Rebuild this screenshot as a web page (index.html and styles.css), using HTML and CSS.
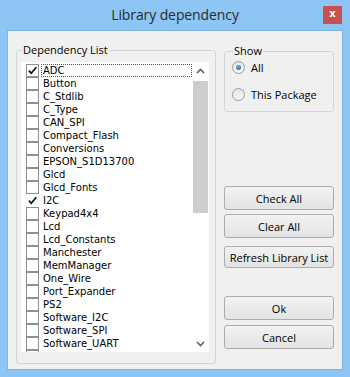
FILE: index.html
```html
<!DOCTYPE html>
<html lang="en">
<head>
  <meta charset="UTF-8">
  <title>Library dependency</title>
  <link rel="stylesheet" href="styles.css">
</head>
<body>
  <div class="window">
    <!-- Title bar -->
    <div class="titlebar">
      <span></span>
      <span class="title">Library dependency</span>
      <span class="controls"><button class="close">x</button></span>
    </div>

    <div class="client">
      <!-- Left: dependency list -->
      <fieldset class="group deps">
        <legend>Dependency List</legend>
        <div class="listbox">
          <ul class="items">
            <li class="focused"><span class="box"><svg viewBox="0 0 12 12"><path d="M2 6.2 L4.6 9 L10.2 2.4" /></svg></span><span class="label">ADC</span></li>
            <li><span class="box"></span><span class="label">Button</span></li>
            <li><span class="box"></span><span class="label">C_Stdlib</span></li>
            <li><span class="box"></span><span class="label">C_Type</span></li>
            <li><span class="box"></span><span class="label">CAN_SPI</span></li>
            <li><span class="box"></span><span class="label">Compact_Flash</span></li>
            <li><span class="box"></span><span class="label">Conversions</span></li>
            <li><span class="box"></span><span class="label">EPSON_S1D13700</span></li>
            <li><span class="box"></span><span class="label">Glcd</span></li>
            <li><span class="box"></span><span class="label">Glcd_Fonts</span></li>
            <li><span class="box plain"><svg viewBox="0 0 12 12"><path d="M2 6.2 L4.6 9 L10.2 2.4" /></svg></span><span class="label">I2C</span></li>
            <li><span class="box"></span><span class="label">Keypad4x4</span></li>
            <li><span class="box"></span><span class="label">Lcd</span></li>
            <li><span class="box"></span><span class="label">Lcd_Constants</span></li>
            <li><span class="box"></span><span class="label">Manchester</span></li>
            <li><span class="box"></span><span class="label">MemManager</span></li>
            <li><span class="box"></span><span class="label">One_Wire</span></li>
            <li><span class="box"></span><span class="label">Port_Expander</span></li>
            <li><span class="box"></span><span class="label">PS2</span></li>
            <li><span class="box"></span><span class="label">Software_I2C</span></li>
            <li><span class="box"></span><span class="label">Software_SPI</span></li>
            <li><span class="box"></span><span class="label">Software_UART</span></li>
            <li><span class="box"></span></li>
          </ul>
          <div class="scrollbar">
            <span class="arrow"><svg viewBox="0 0 9 6"><path d="M1 5 L4.5 1.5 L8 5" /></svg></span>
            <div class="track"><div class="thumb"></div></div>
            <span class="arrow"><svg viewBox="0 0 9 6"><path d="M1 1 L4.5 4.5 L8 1" /></svg></span>
          </div>
        </div>
      </fieldset>

      <!-- Right: options and actions -->
      <div class="side">
        <fieldset class="group show">
          <legend>Show</legend>
          <label class="radio"><span class="dot on"></span>All</label>
          <label class="radio"><span class="dot"></span>This Package</label>
        </fieldset>
        <button class="btn check-all">Check All</button>
        <button class="btn clear-all">Clear All</button>
        <button class="btn refresh">Refresh Library List</button>
        <button class="btn ok">Ok</button>
        <button class="btn cancel">Cancel</button>
      </div>
    </div>
  </div>
</body>
</html>
```

FILE: styles.css
```css
/* Page */
body {
  margin: 0;
  padding: 0;
  background: #8dc6f4;
  font-family: "DejaVu Sans", sans-serif;
}
.window {
  width: 350px;
  height: 377px;
  box-sizing: border-box;
  background: #8dc6f4;
  padding: 0 7px 7px 7px;
  display: flex;
  flex-direction: column;
}
/* Title bar */
.titlebar {
  height: 30px;
  display: grid;
  grid-template-columns: 1fr auto 1fr;
  align-items: start;
}
.title {
  font-family: "Open Sans", sans-serif;
  font-size: 14px;
  color: #2b2b2b;
  margin-top: 5px;
  letter-spacing: -0.1px;
}
.controls {
  display: flex;
  justify-content: flex-end;
  padding-right: 1px;
}
.close {
  width: 19px;
  height: 18px;
  margin-top: 6px;
  border: 0;
  padding: 0 0 2px 0;
  background: #c75050;
  color: #fff;
  font-family: "DejaVu Sans", sans-serif;
  font-weight: bold;
  font-size: 10px;
  line-height: 16px;
}
/* Client area */
.client {
  flex: 1;
  background: #f0f0f0;
  border: 1px solid #82b3dc;
  display: flex;
  padding: 12px 0 0 8px;
  gap: 8px;
}
.group {
  margin: 0;
  border: 1px solid #d5d5d5;
  border-radius: 3px;
  box-sizing: border-box;
}
.group legend {
  font-family: "Open Sans", sans-serif;
  font-size: 11px;
  padding: 0 1px;
  margin-left: 1px;
  color: #000;
  line-height: 14px;
}
.deps {
  width: 200px;
  height: 321px;
  padding: 5px 6px 3px 4px;
}
/* List with checkboxes */
.listbox {
  background: #fff;
  height: 290px;
  display: flex;
  overflow: hidden;
}
.items {
  list-style: none;
  margin: 0;
  padding: 2px 0 0 5px;
  flex: 1;
}
.items li {
  height: 13px;
  display: flex;
  align-items: center;
  font-size: 10px;
  color: #000;
}
.box {
  width: 11px;
  height: 11px;
  border: 1px solid #8f8f8f;
  background: #fff;
  margin-right: 2px;
  flex: none;
  display: flex;
}
.box svg {
  width: 11px;
  height: 11px;
  fill: none;
  stroke: #111;
  stroke-width: 1.9;
}
.box.plain {
  border-color: #fff;
}
.label {
  flex: 1;
  line-height: 11px;
  border: 1px dotted transparent;
  padding-left: 1px;
}
.focused .label {
  border-color: #555;
}
/* Scrollbar */
.scrollbar {
  width: 17px;
  display: flex;
  flex-direction: column;
}
.arrow {
  height: 17px;
  display: flex;
  align-items: center;
  justify-content: center;
}
.arrow svg {
  width: 9px;
  height: 6px;
  fill: none;
  stroke: #5f5f5f;
  stroke-width: 1.6;
}
.track {
  flex: 1;
  padding: 2px 1px 0 1px;
}
.thumb {
  height: 132px;
  background: #cdcdcd;
}
/* Right column */
.side {
  width: 110px;
  display: flex;
  flex-direction: column;
}
.show {
  height: 68px;
  padding: 2px 0 0 7px;
  margin-top: 1px;
  display: flex;
  flex-direction: column;
  gap: 12px;
}
.radio {
  display: flex;
  align-items: center;
  font-family: "Open Sans", sans-serif;
  font-size: 11px;
  color: #000;
}
.dot {
  width: 11px;
  height: 11px;
  border: 1px solid #9a9a9a;
  border-radius: 50%;
  background: linear-gradient(#e6e6e6, #f7f7f7);
  margin-right: 6px;
  display: flex;
  align-items: center;
  justify-content: center;
}
.dot.on::after {
  content: "";
  width: 5px;
  height: 5px;
  border-radius: 50%;
  background: radial-gradient(circle at 40% 35%, #6aa8e0, #1c5e9e);
}
.btn {
  height: 24px;
  border: 1px solid #acacac;
  border-radius: 3px;
  background: linear-gradient(#f2f2f2, #e3e3e3);
  font-family: "Open Sans", sans-serif;
  font-size: 11px;
  color: #000;
  padding: 0;
}
.check-all {
  margin-top: 74px;
}
.clear-all {
  margin-top: 4px;
}
.refresh {
  margin-top: 8px;
  height: 22px;
}
.ok {
  margin-top: 28px;
}
.cancel {
  margin-top: 5px;
}
```
